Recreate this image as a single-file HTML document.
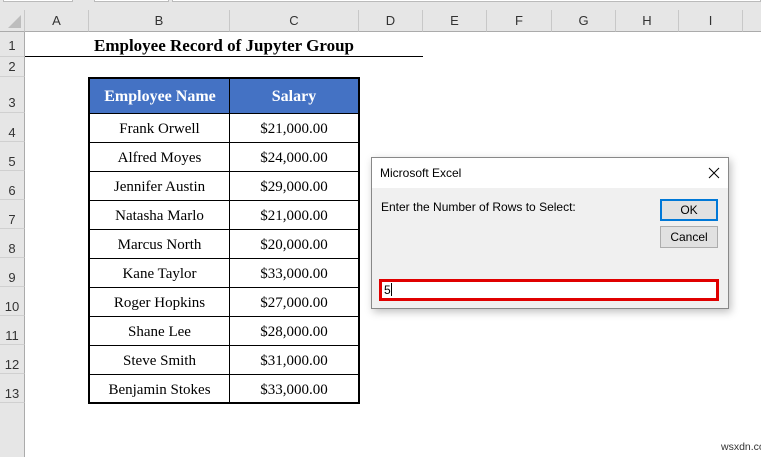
<!DOCTYPE html>
<html><head><style>
*{margin:0;padding:0;box-sizing:border-box}
body{width:761px;height:457px;background:#fff;position:relative;overflow:hidden;font-family:"Liberation Sans",sans-serif}
.a{position:absolute}
.ch{position:absolute;top:10px;height:22px;background:#e6e6e6;border-bottom:1px solid #ababab;border-right:1px solid #c8c8c8;font-size:13px;color:#333;text-align:center;line-height:22px}
.rh{position:absolute;left:0;width:25px;background:#e6e6e6;border-right:1px solid #ababab;border-bottom:1px solid #d0d0d0;font-size:13px;color:#333;text-align:center}
.cell{position:absolute;font-family:"Liberation Serif",serif;font-size:15px;text-align:center;line-height:32px;color:#000}
</style></head><body>
<div class="a" style="left:0;top:0;width:761px;height:10px;background:#e6e6e6"></div>
<div class="a" style="left:3px;top:0;width:70px;height:2px;border:1px solid #bbb;border-top:none;background:#fff"></div>
<div class="a" style="left:94px;top:0;width:75px;height:2px;border:1px solid #bbb;border-top:none;background:#fff"></div>
<div class="a" style="left:172px;top:0;width:589px;height:2px;border:1px solid #bbb;border-top:none;background:#fff"></div>
<div class="ch" style="left:0;width:25px"><svg width="25" height="22" style="position:absolute;left:0;top:0"><polygon points="21,5 21,18 8,18" fill="#bdbdbd"/></svg></div>
<div class="ch" style="left:25px;width:64px">A</div>
<div class="ch" style="left:89px;width:141px">B</div>
<div class="ch" style="left:230px;width:129px">C</div>
<div class="ch" style="left:359px;width:64px">D</div>
<div class="ch" style="left:423px;width:64px">E</div>
<div class="ch" style="left:487px;width:65px">F</div>
<div class="ch" style="left:552px;width:64px">G</div>
<div class="ch" style="left:616px;width:63px">H</div>
<div class="ch" style="left:679px;width:64px">I</div>
<div class="ch" style="left:743px;width:20px"></div>
<div class="rh" style="top:32px;height:25px;line-height:28px">1</div>
<div class="rh" style="top:57px;height:20px;line-height:20px">2</div>
<div class="rh" style="top:77px;height:36px;line-height:52px">3</div>
<div class="rh" style="top:113px;height:29px;line-height:40px">4</div>
<div class="rh" style="top:142px;height:29px;line-height:40px">5</div>
<div class="rh" style="top:171px;height:29px;line-height:40px">6</div>
<div class="rh" style="top:200px;height:29px;line-height:40px">7</div>
<div class="rh" style="top:229px;height:29px;line-height:40px">8</div>
<div class="rh" style="top:258px;height:29px;line-height:40px">9</div>
<div class="rh" style="top:287px;height:29px;line-height:40px">10</div>
<div class="rh" style="top:316px;height:29px;line-height:40px">11</div>
<div class="rh" style="top:345px;height:29px;line-height:40px">12</div>
<div class="rh" style="top:374px;height:29px;line-height:40px">13</div>
<div class="rh" style="top:403px;height:54px;border-bottom:none"></div>
<div class="cell" style="left:25px;top:32px;width:398px;height:25px;line-height:28px;font-weight:bold;font-size:17px">Employee Record of Jupyter Group</div>
<div class="a" style="left:25px;top:56px;width:398px;height:1px;background:#000"></div>
<div class="a" style="left:88px;top:77px;width:272px;height:327px;border:2px solid #000"></div>
<div class="a" style="left:90px;top:79px;width:268px;height:34px;background:#4472c4"></div>
<div class="cell" style="left:90px;top:79px;width:140px;height:34px;line-height:36px;color:#fff;font-weight:bold;font-size:16px">Employee Name</div>
<div class="cell" style="left:230px;top:79px;width:128px;height:34px;line-height:36px;color:#fff;font-weight:bold;font-size:16px">Salary</div>
<div class="a" style="left:229px;top:79px;width:1px;height:323px;background:#000"></div>
<div class="cell" style="left:90px;top:113px;width:139px">Frank Orwell</div><div class="cell" style="left:230px;top:113px;width:128px">$21,000.00</div>
<div class="cell" style="left:90px;top:142px;width:139px">Alfred Moyes</div><div class="cell" style="left:230px;top:142px;width:128px">$24,000.00</div>
<div class="cell" style="left:90px;top:171px;width:139px">Jennifer Austin</div><div class="cell" style="left:230px;top:171px;width:128px">$29,000.00</div>
<div class="cell" style="left:90px;top:200px;width:139px">Natasha Marlo</div><div class="cell" style="left:230px;top:200px;width:128px">$21,000.00</div>
<div class="cell" style="left:90px;top:229px;width:139px">Marcus North</div><div class="cell" style="left:230px;top:229px;width:128px">$20,000.00</div>
<div class="cell" style="left:90px;top:258px;width:139px">Kane Taylor</div><div class="cell" style="left:230px;top:258px;width:128px">$33,000.00</div>
<div class="cell" style="left:90px;top:287px;width:139px">Roger Hopkins</div><div class="cell" style="left:230px;top:287px;width:128px">$27,000.00</div>
<div class="cell" style="left:90px;top:316px;width:139px">Shane Lee</div><div class="cell" style="left:230px;top:316px;width:128px">$28,000.00</div>
<div class="cell" style="left:90px;top:345px;width:139px">Steve Smith</div><div class="cell" style="left:230px;top:345px;width:128px">$31,000.00</div>
<div class="cell" style="left:90px;top:374px;width:139px">Benjamin Stokes</div><div class="cell" style="left:230px;top:374px;width:128px">$33,000.00</div>
<div class="a" style="left:90px;top:113px;width:268px;height:1px;background:#000"></div>
<div class="a" style="left:90px;top:142px;width:268px;height:1px;background:#000"></div>
<div class="a" style="left:90px;top:171px;width:268px;height:1px;background:#000"></div>
<div class="a" style="left:90px;top:200px;width:268px;height:1px;background:#000"></div>
<div class="a" style="left:90px;top:229px;width:268px;height:1px;background:#000"></div>
<div class="a" style="left:90px;top:258px;width:268px;height:1px;background:#000"></div>
<div class="a" style="left:90px;top:287px;width:268px;height:1px;background:#000"></div>
<div class="a" style="left:90px;top:316px;width:268px;height:1px;background:#000"></div>
<div class="a" style="left:90px;top:345px;width:268px;height:1px;background:#000"></div>
<div class="a" style="left:90px;top:374px;width:268px;height:1px;background:#000"></div>
<div class="a" style="left:371px;top:157px;width:358px;height:152px;background:#f0f0f0;border:1px solid #888;box-shadow:2px 3px 8px rgba(0,0,0,.25)">
<div class="a" style="left:0;top:0;width:356px;height:30px;background:#fff;font-size:12px;line-height:30px;padding-left:8px;color:#000">Microsoft Excel</div>
<svg class="a" style="left:336px;top:9px" width="12" height="12"><path d="M1 1L11 11M11 1L1 11" stroke="#000" stroke-width="1"/></svg>
<div class="a" style="left:9px;top:42px;font-size:12px;color:#000">Enter the Number of Rows to Select:</div>
<div class="a" style="left:288px;top:41px;width:58px;height:22px;border:2px solid #0078d7;background:#e1e1e1;font-size:12px;text-align:center;line-height:18px">OK</div>
<div class="a" style="left:288px;top:68px;width:58px;height:22px;border:1px solid #adadad;background:#e1e1e1;font-size:12px;text-align:center;line-height:20px">Cancel</div>
<div class="a" style="left:7px;top:121px;width:340px;height:22px;border:3px solid #e00000;background:#fff;font-size:12px;line-height:16px;padding-left:2px">5<span style="display:inline-block;width:1px;height:13px;background:#000;vertical-align:-2px"></span></div>
</div>
<div class="a" style="left:721px;top:441px;font-size:10.5px;color:#333">wsxdn.com</div>
</body></html>
